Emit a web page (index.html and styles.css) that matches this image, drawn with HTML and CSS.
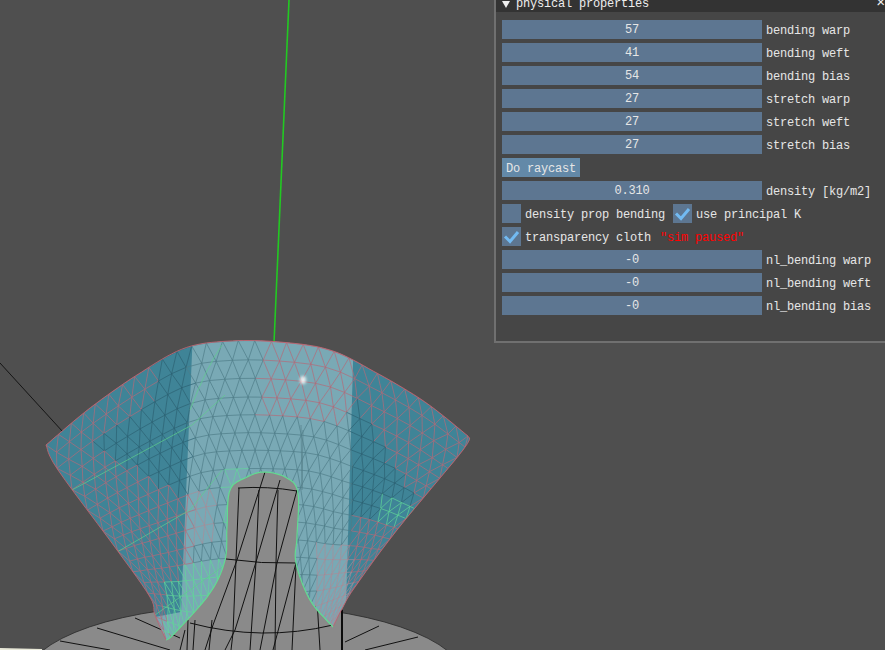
FILE: index.html
```html
<!DOCTYPE html>
<html lang="en">
<head>
    <meta charset="UTF-8">
    <meta name="viewport" content="width=device-width, initial-scale=1.0">
    <title>cloth sim</title>
    <link rel="stylesheet" href="styles.css">
</head>
<body>
    <svg class="scene" width="885" height="650" viewBox="0 0 885 650">
        <polygon class="paper" points="0,648 42,649 42,650 0,650"/>
        <line class="axis-black" x1="0" y1="363" x2="63" y2="432"/>
        <line class="axis-green" x1="289" y1="0" x2="274" y2="343"/>

        <!-- floor disc -->
        <ellipse class="disc" cx="245" cy="680" rx="220" ry="75"/>
        <g class="wire">
            <path d="M135 618L180 638M97 628L170 650M60 641L110 650M379 626L345 642M418 637L365 650"/>
        </g>

        <!-- cylinder -->
        <path class="cyl" d="M180 650V520Q180 472 262 470Q342 472 342 520V650Z"/>
        <g class="wire">
            <path d="M238 488Q268 486 297 491M226 559Q262 564 296 563M190 623Q262 642 333 625"/>
            <path d="M265 472L237 560L213 625L205 650M280 480L256 562L235 630L225 650M297 490L277 563L260 650"/>
            <path d="M239 488L236 560L233 633L231 650M259 490L256 562L250 650M278 490L276 563L275 650"/>
            <path d="M296 565L292 650M296 563L273 650M185 630L180 650M188 620L187 650M195 620L193 650M212 620L209 650M317 600L320 650"/>
        </g>
        <line class="cyl-edge" x1="342" y1="610" x2="342" y2="650"/>

        <!-- cloth, filled in by script.js -->
        <g id="cloth"></g>
        <ellipse class="glint" cx="303" cy="380" rx="3" ry="4"/>
    </svg>

    <div class="panel">
        <div class="title">
            <span class="arrow"></span>
            <span class="title-text">physical properties</span>
            <span class="close">×</span>
        </div>
        <div class="body">
            <div class="row"><div class="slider">57</div><span>bending warp</span></div>
            <div class="row"><div class="slider">41</div><span>bending weft</span></div>
            <div class="row"><div class="slider">54</div><span>bending bias</span></div>
            <div class="row"><div class="slider">27</div><span>stretch warp</span></div>
            <div class="row"><div class="slider">27</div><span>stretch weft</span></div>
            <div class="row"><div class="slider">27</div><span>stretch bias</span></div>
            <div class="row"><button class="btn">Do raycast</button></div>
            <div class="row"><div class="slider">0.310</div><span>density [kg/m2]</span></div>
            <div class="row">
                <div class="check"></div><span>density prop bending</span>
                <div class="check second">
                    <svg width="19" height="19" viewBox="0 0 19 19"><path class="tick" d="M3 9.5L8 14.5L16 5"/></svg>
                </div><span>use principal K</span>
            </div>
            <div class="row">
                <div class="check">
                    <svg width="19" height="19" viewBox="0 0 19 19"><path class="tick" d="M3 9.5L8 14.5L16 5"/></svg>
                </div><span>transparency cloth</span>
                <span class="paused">"sim paused"</span>
            </div>
            <div class="row"><div class="slider">-0</div><span>nl_bending warp</span></div>
            <div class="row"><div class="slider">-0</div><span>nl_bending weft</span></div>
            <div class="row"><div class="slider">-0</div><span>nl_bending bias</span></div>
        </div>
    </div>

    <script src="script.js"></script>
</body>
</html>
```

FILE: styles.css
```css
* {
    margin: 0;
    padding: 0;
    box-sizing: border-box;
}
body {
    background: #4f4f4f;
    width: 885px;
    height: 650px;
    overflow: hidden;
    position: relative;
    font-family: "Liberation Mono", monospace;
    font-size: 12px;
    letter-spacing: -0.2px;
    color: #e6e6e6;
}
.scene {
    display: block;
}
.paper {
    fill: #e8e8d8;
}
.axis-black {
    stroke: #151515;
    stroke-width: 1;
}
.axis-green {
    stroke: #22c922;
    stroke-width: 1.6;
}
.disc, .cyl {
    fill: #8a8a8a;
}
.disc {
    stroke: #2a2a2a;
    stroke-width: 0.8;
}
.wire {
    fill: none;
    stroke: #111;
    stroke-width: 1;
}
.cyl-edge {
    stroke: #0c0c0c;
    stroke-width: 2;
}
.glint {
    fill: #fff;
    opacity: 0.85;
    filter: blur(1.5px);
}

/* window */
.panel {
    position: absolute;
    left: 494px;
    top: -8px;
    width: 396px;
    height: 351px;
    background: #464646;
    border: 2px solid #707070;
}
.title {
    display: flex;
    align-items: center;
    height: 18px;
    padding-top: 2px;
    background: #333;
    color: #eee;
}
.arrow {
    width: 0;
    height: 0;
    margin-left: 6px;
    border-left: 4px solid transparent;
    border-right: 4px solid transparent;
    border-top: 7px solid #eee;
}
.title-text {
    margin-left: 6px;
    flex: 1;
}
.close {
    font-size: 15px;
    line-height: 12px;
    margin-right: 3px;
}
.body {
    display: flex;
    flex-direction: column;
    gap: 4px;
    padding: 8px 6px 0;
}
.row {
    display: flex;
    align-items: center;
    gap: 4px;
    height: 19px;
    white-space: nowrap;
}
.row span {
    padding-top: 2px;
}
.slider {
    width: 260px;
    height: 19px;
    line-height: 21px;
    text-align: center;
    background: #5d7691;
}
.btn {
    width: 78px;
    height: 19px;
    padding-top: 2px;
    border: none;
    background: #6389a8;
    color: #e6e6e6;
    font: inherit;
    letter-spacing: inherit;
}
.check {
    width: 19px;
    height: 19px;
    background: #5d7691;
}
.check svg {
    display: block;
}
.second {
    margin-left: 4px;
}
.tick {
    fill: none;
    stroke: #72baf2;
    stroke-width: 3;
}
.paused {
    margin-left: 5px;
    color: #f00;
}
```

FILE: script.js
```js
// cloth mesh: a coons patch between four edge curves, clipped to the real outline
const topEdge = [[46,445],[90,408],[140,373],[185,348],[230,341],[280,342],[330,350],[375,372],[425,402],[468,436]];
const archEdge = [[166,640],[175,633],[210,593],[225,560],[227,527],[230,490],[247,477],[265,472],[287,478],[298,493],[297,537],[296,563],[310,600],[333,627]];
const lowEdge = [[166,640],[200,662],[250,672],[300,658],[333,627]];
const leftEdge = [[46,445],[58,470],[117,550],[150,597],[155,615],[166,640]];
const rightEdge = [[468,436],[463,450],[397,530],[355,587],[343,607],[333,627]];

const COLS = 30;
const ROWS = 18;
const NS = 'http://www.w3.org/2000/svg';

function at(pts, t) {
    const f = t * (pts.length - 1);
    const i = Math.min(Math.floor(f), pts.length - 2);
    const k = f - i;
    const p0 = pts[Math.max(i - 1, 0)], p1 = pts[i], p2 = pts[i + 1], p3 = pts[Math.min(i + 2, pts.length - 1)];
    const out = [];
    for (let c = 0; c < 2; c++) {
        out[c] = 0.5 * (2 * p1[c] + (p2[c] - p0[c]) * k
            + (2 * p0[c] - 5 * p1[c] + 4 * p2[c] - p3[c]) * k * k
            + (3 * p1[c] - p0[c] - 3 * p2[c] + p3[c]) * k * k * k);
    }
    return out;
}

function sample(pts, n) {
    const out = [];
    for (let i = 0; i <= n; i++) out.push(at(pts, i / n));
    return out;
}

// same curve, but t runs along its length
function even(pts) {
    const dense = sample(pts, 300);
    const len = [0];
    for (let i = 1; i < dense.length; i++) {
        len[i] = len[i - 1] + Math.hypot(dense[i][0] - dense[i - 1][0], dense[i][1] - dense[i - 1][1]);
    }
    return t => {
        const want = t * len[len.length - 1];
        let i = 0;
        while (i < len.length - 1 && len[i] < want) i++;
        return dense[i];
    };
}

const T = even(topEdge), B = even(lowEdge), L = even(leftEdge), R = even(rightEdge);

function patch(u, v) {
    const t = T(u), b = B(u), l = L(v), r = R(v);
    const c00 = topEdge[0], c10 = topEdge[topEdge.length - 1];
    const c01 = lowEdge[0], c11 = lowEdge[lowEdge.length - 1];
    return [0, 1].map(c => (1 - v) * t[c] + v * b[c] + (1 - u) * l[c] + u * r[c]
        - ((1 - u) * (1 - v) * c00[c] + u * (1 - v) * c10[c] + (1 - u) * v * c01[c] + u * v * c11[c]));
}

function add(parent, name, attrs) {
    const el = document.createElementNS(NS, name);
    for (const k in attrs) el.setAttribute(k, attrs[k]);
    parent.appendChild(el);
    return el;
}

function toPath(pts) {
    return 'M' + pts.map(p => p[0].toFixed(1) + ' ' + p[1].toFixed(1)).join('L');
}

// which colour an edge gets, going by where it is on screen
function edgeColor(x, y) {
    const red = '#b56a78', green = '#62d79a';
    if (x > 165 && x < 240 && y > 560 + (225 - x) * 0.3 && y < 640) return green;
    if (x > 225 && x < 245 && y > 465 && y < 530) return green;
    if (x > 378 && x < 413 && y > 500 && y < 522) return green;
    if (x < 193 && y > 0.55 * x + 395) return red;
    if (x < 155 && y < 506 - 0.68 * x) return red;
    if (x > 180 && x < 215 && y > 490 && y < 540) return '#a98d98';
    if (x > 262 && x < 352 && y < 420) return red;
    if (x > 315 && x < 352 && y > 545) return '#a98d98';
    if (x > 352 && !(y > 395 && y < 515 && x < 352 + (y - 395) * 0.6)) return red;
    return x > 190 && x < 352 ? '#4f7c88' : '#2c6272';
}

const cloth = document.getElementById('cloth');
const outline = sample(topEdge, 80)
    .concat(sample(rightEdge, 30), sample(archEdge, 90).reverse(), sample(leftEdge, 30).reverse());

const defs = add(cloth, 'defs', {});
add(add(defs, 'clipPath', { id: 'clothClip' }), 'path', { d: toPath(outline) + 'Z' });

const fill = add(cloth, 'g', { 'clip-path': 'url(#clothClip)' });
add(fill, 'rect', { x: 0, y: 300, width: 500, height: 350, fill: '#3f8497' });
add(fill, 'polygon', { points: '193,330 354,330 345,640 148,645 155,617 181,612', fill: '#79a9b5' });

// triangle lattice, odd rows shifted half a cell
const grid = [];
for (let j = 0; j <= ROWS; j++) {
    grid[j] = [];
    for (let i = 0; i <= COLS; i++) {
        const u = Math.min((i + (j % 2) * 0.5) / COLS, 1);
        grid[j][i] = patch(u, j / ROWS);
    }
}

function edge(a, b) {
    add(fill, 'line', {
        x1: a[0], y1: a[1], x2: b[0], y2: b[1],
        stroke: edgeColor((a[0] + b[0]) / 2, (a[1] + b[1]) / 2), 'stroke-width': 0.7
    });
}

for (let j = 0; j <= ROWS; j++) {
    for (let i = 0; i <= COLS; i++) {
        if (i < COLS) edge(grid[j][i], grid[j][i + 1]);
        if (j === ROWS) continue;
        edge(grid[j][i], grid[j + 1][i]);
        const side = j % 2 ? i + 1 : i - 1;
        if (side >= 0 && side <= COLS) edge(grid[j][i], grid[j + 1][side]);
    }
}

// long green seams and the fold beside the arch
add(fill, 'path', {
    d: 'M72 490L192 425L225 395M117 552L190 510L222 470M155 615L225 565M222 345Q205 370 190 410',
    fill: 'none', stroke: '#5fcf8c', 'stroke-width': 0.7
});
add(fill, 'path', {
    d: 'M301 425L302 488M303 430L302 490',
    fill: 'none', stroke: '#557f8a', 'stroke-width': 0.7
});

// edges
const stroke = (pts, color, w) => add(cloth, 'path', { d: toPath(pts), fill: 'none', stroke: color, 'stroke-width': w });
stroke(sample(topEdge, 80), '#c0636e', 0.9);
stroke(sample(leftEdge, 30), '#c0636e', 0.9);
stroke(sample(rightEdge, 30), '#c0636e', 0.9);
stroke(sample(archEdge, 90), '#62dc90', 1.2);
```
